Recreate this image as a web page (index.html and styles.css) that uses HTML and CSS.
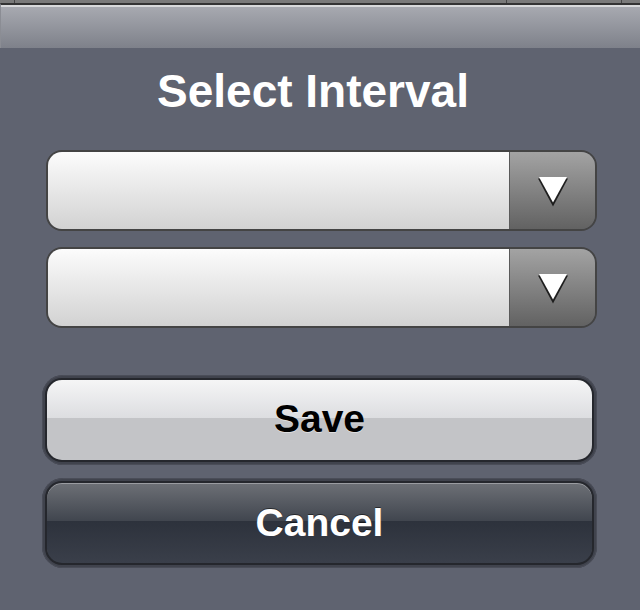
FILE: index.html
```html
<!DOCTYPE html>
<html>
<head>
<meta charset="utf-8">
<link rel="stylesheet" href="styles.css">
</head>
<body>
<div class="topstrip">
  <span class="seg seg-a"></span>
  <span class="seg seg-b"></span>
  <span class="seg seg-c"></span>
</div>
<div class="titlebar"></div>
<main class="panel">
  <h1 class="title">Select Interval</h1>
  <div class="selects">
    <div class="select">
      <div class="select-field"></div>
      <div class="select-drop">
        <svg class="arrow" width="30" height="30" viewBox="0 0 30 30">
          <polygon points="0,1.5 30,1.5 15,29.5" fill="#1e1e1e"/>
          <polygon points="1,0 29,0 15,25.5" fill="#ffffff"/>
        </svg>
      </div>
    </div>
    <div class="select">
      <div class="select-field"></div>
      <div class="select-drop">
        <svg class="arrow" width="30" height="30" viewBox="0 0 30 30">
          <polygon points="0,1.5 30,1.5 15,29.5" fill="#1e1e1e"/>
          <polygon points="1,0 29,0 15,25.5" fill="#ffffff"/>
        </svg>
      </div>
    </div>
  </div>
  <div class="buttons">
    <div class="well"><button class="btn btn-save">Save</button></div>
    <div class="well"><button class="btn btn-cancel">Cancel</button></div>
  </div>
</main>
</body>
</html>
```

FILE: styles.css
```css
html, body {
  margin: 0;
  padding: 0;
}
body {
  width: 640px;
  height: 610px;
  background: #5f6370;
  font-family: "Liberation Sans", Arial, sans-serif;
  overflow: hidden;
}
.topstrip {
  height: 3px;
  background: #7a7a7a;
  display: flex;
}
.seg {
  display: block;
  height: 3px;
  border-right: 1px solid #454545;
}
.seg-a { width: 14px; }
.seg-b { width: 491px; }
.seg-c { width: 114px; }
.titlebar {
  height: 43px;
  border-top: 2px solid #333333;
  border-left: 1px solid #8b8d94;
  background: linear-gradient(#d8d9db 0, #d8d9db 2px, #a7a9b0 2px, #7e818a 100%);
}
.panel {
  padding: 17px 43px 0 42px;
}
.title {
  margin: 0;
  padding-right: 13px;
  font-size: 46px;
  line-height: 53px;
  font-weight: bold;
  color: #ffffff;
  text-align: center;
}
.selects {
  margin: 32px 0 0 4px;
  display: flex;
  flex-direction: column;
  gap: 16px;
}
.select {
  height: 77px;
  border: 2.5px solid #444444;
  border-radius: 16px;
  display: flex;
  overflow: hidden;
}
.select-field {
  flex: 1;
  background: linear-gradient(#fcfcfc, #d2d2d2);
}
.select-drop {
  width: 85px;
  border-left: 1px solid #5a5a5a;
  background: linear-gradient(#a3a3a3, #626262);
  display: flex;
  align-items: center;
  justify-content: center;
}
.arrow {
  display: block;
  margin-top: 3px;
}
.buttons {
  margin-top: 47px;
  display: flex;
  flex-direction: column;
  gap: 13px;
}
.well {
  height: 84px;
  padding: 3px;
  border-radius: 21px;
  background: #40434d;
  box-shadow: inset 0 0 0 1px #4a4d58;
}
.btn {
  display: flex;
  align-items: center;
  justify-content: center;
  width: 100%;
  height: 84px;
  margin: 0;
  padding: 0;
  border: 2px solid #25272d;
  border-radius: 17px;
  font-family: "Liberation Sans", Arial, sans-serif;
  font-size: 39px;
  font-weight: bold;
}
.btn-save {
  color: #000000;
  padding-bottom: 3px;
  background: linear-gradient(#f5f5f6 0, #dcdde0 48%, #c3c4c7 48%, #c3c4c7 100%);
  text-shadow: 0 1px 0 rgba(255, 255, 255, 0.45);
}
.btn-cancel {
  color: #ffffff;
  background: linear-gradient(#6d7076 0, #40454e 48%, #2d323c 48%, #3a3f4a 100%);
  box-shadow: inset 0 1px 0 #9a9ca1;
  text-shadow: 0 -1px 0 rgba(0, 0, 0, 0.5);
}
```
